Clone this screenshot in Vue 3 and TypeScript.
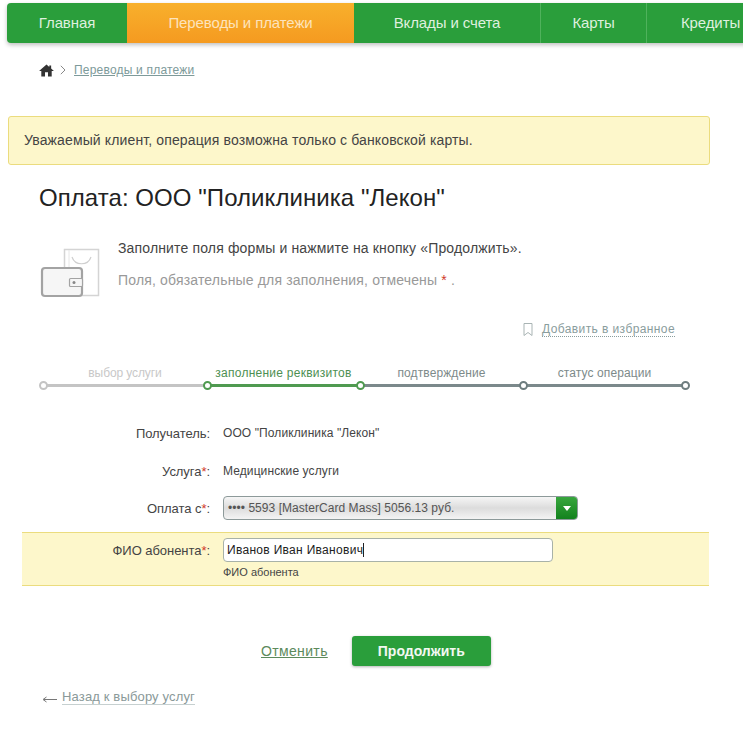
<script setup lang="ts">
interface NavItem { label: string; width: number; active?: boolean }
const nav: NavItem[] = [
  { label: 'Главная', width: 120 },
  { label: 'Переводы и платежи', width: 227, active: true },
  { label: 'Вклады и счета', width: 187 },
  { label: 'Карты', width: 106 },
  { label: 'Кредиты', width: 127 },
]
interface Step { label: string; state: string; width: number }
const steps: Step[] = [
  { label: 'выбор услуги', state: 'done', width: 164 },
  { label: 'заполнение реквизитов', state: 'active', width: 153 },
  { label: 'подтверждение', state: 'next', width: 163 },
  { label: 'статус операции', state: 'next', width: 163 },
]
</script>

<template>
  <div class="page">
    <nav class="nav">
      <a
        v-for="item in nav"
        :key="item.label"
        class="nav-item"
        :class="{ active: item.active }"
        :style="{ width: item.width + 'px' }"
      >{{ item.label }}</a>
    </nav>

    <div class="crumbs">
      <svg class="home" width="15" height="13" viewBox="0 0 16 14">
        <path d="M8 .5 0 7.600h2.400V13.500h4V9h3.200v4.500h4V7.600H16L13 4.900V1.500h-2v1.600Z" fill="#333" />
      </svg>
      <svg class="chev" width="6" height="10" viewBox="0 0 6 10">
        <path d="M.8.8 5 5 .8 9.200" fill="none" stroke="#888" />
      </svg>
      <a class="crumb-link">Переводы и платежи</a>
    </div>

    <div class="alert">Уважаемый клиент, операция возможна только с банковской карты.</div>

    <h1 class="title">Оплата: ООО "Поликлиника "Лекон"</h1>

    <div class="intro">
      <svg class="wallet" width="60" height="52" viewBox="0 0 60 52">
        <rect x="24.500" y="1.500" width="34" height="46" fill="#fff" stroke="#d4d4d4" stroke-width="1.500" />
        <path d="M29 2v20" stroke="#e6e6e6" />
        <path d="M32 9c3 9 16 9 19 0" fill="none" stroke="#cfcfcf" stroke-width="1.200" />
        <rect x="2" y="20" width="40" height="28" rx="3" fill="#f6f6f6" stroke="#a3a3a3" stroke-width="2.200" />
        <rect x="29.500" y="30.500" width="13" height="8" rx="1" fill="#f6f6f6" stroke="#a3a3a3" stroke-width="1.200" />
        <circle cx="34" cy="34.500" r="1.500" fill="#888" />
      </svg>
      <div class="intro-text">
        <p class="intro-main">Заполните поля формы и нажмите на кнопку «Продолжить».</p>
        <p class="intro-sub">Поля, обязательные для заполнения, отмечены <span class="req">*</span> .</p>
      </div>
    </div>

    <div class="fav-row">
      <svg width="10" height="13" viewBox="0 0 10 13">
        <path d="M1 .5h8v12L5 9.500 1 12.500Z" fill="none" stroke="#a9b4b4" />
      </svg>
      <a class="fav">Добавить в избранное</a>
    </div>

    <div class="steps">
      <div
        v-for="step in steps"
        :key="step.label"
        class="step"
        :class="step.state"
        :style="{ width: step.width + 'px' }"
      >
        <div class="step-label">{{ step.label }}</div>
        <div class="step-line"><i class="dot" /></div>
      </div>
      <i class="dot end" />
    </div>

    <div class="form">
      <div class="row row-a">
        <div class="label">Получатель:</div>
        <div class="value">ООО "Поликлиника "Лекон"</div>
      </div>
      <div class="row row-b">
        <div class="label">Услуга<span class="req">*</span>:</div>
        <div class="value">Медицинские услуги</div>
      </div>
      <div class="row row-c">
        <div class="label">Оплата с<span class="req">*</span>:</div>
        <div class="select">
          <span class="select-text">•••• 5593 [MasterCard Mass] 5056.13 руб.</span>
          <span class="select-btn"><i class="tri" /></span>
        </div>
      </div>
      <div class="row-hl">
        <div class="label hl-label">ФИО абонента<span class="req">*</span>:</div>
        <div class="hl-field">
          <div class="input">Иванов Иван Иванович<i class="caret" /></div>
          <div class="hint">ФИО абонента</div>
        </div>
      </div>
    </div>

    <div class="actions">
      <a class="cancel">Отменить</a>
      <button class="submit" type="button">Продолжить</button>
    </div>

    <div class="back">
      <svg width="15" height="9" viewBox="0 0 15 9">
        <path d="M15 4.500H2M4.500 2 1 4.500 4.500 7" fill="none" stroke="#777" />
      </svg>
      <a class="back-link">Назад к выбору услуг</a>
    </div>
  </div>
</template>

<style>
html, body { margin: 0; background: #fff; overflow: hidden; }
</style>

<style scoped>
.page {
  width: 743px;
  height: 739px;
  overflow: hidden;
  font-family: "Liberation Sans", Arial, sans-serif;
  color: #333;
  padding-top: 3px;
  box-sizing: border-box;
}
.nav {
  display: flex;
  margin-left: 7px;
  width: 760px;
  height: 40px;
  background: #2a9e3b;
  border-radius: 4px 0 0 4px;
  box-shadow: 0 2px 4px rgba(0, 0, 0, .25);
}
.nav-item {
  flex: none;
  box-sizing: border-box;
  height: 40px;
  line-height: 40px;
  text-align: center;
  color: #dff0df;
  font-size: 15px;
  letter-spacing: -.1px;
  border-right: 1px solid #4fb25c;
}
.nav-item:first-child { border-radius: 4px 0 0 4px; border-right: 0; }
.nav-item:nth-child(2), .nav-item:last-child { border-right: 0; }
.nav-item.active {
  background: linear-gradient(#f8b02c, #f59a20);
  color: #fde3bc;
}
.crumbs {
  display: flex;
  align-items: center;
  margin: 20px 0 0 39px;
  height: 14px;
}
.chev { margin-left: 6px; }
.crumb-link {
  margin-left: 8px;
  font-size: 12px;
  letter-spacing: .2px;
  color: #7d9a9a;
  text-decoration: underline;
}
.alert {
  margin: 39px 33px 0 8px;
  height: 49px;
  box-sizing: border-box;
  padding: 0 15px;
  line-height: 47px;
  background: #fdf7cb;
  border: 1px solid #ebdc7e;
  border-radius: 3px;
  font-size: 14px;
  letter-spacing: .13px;
  color: #444;
}
.title {
  margin: 19px 0 0 39px;
  font-size: 24px;
  line-height: 28px;
  font-weight: 400;
  letter-spacing: .06px;
  color: #222;
}
.intro {
  display: flex;
  margin: 27px 0 0 40px;
}
.wallet { margin-top: 9px; flex: none; }
.intro-text { margin-left: 18px; }
.intro-main {
  margin: 0;
  font-size: 14px;
  line-height: 18px;
  letter-spacing: .15px;
  color: #444;
}
.intro-sub {
  margin: 14px 0 0;
  font-size: 14px;
  line-height: 18px;
  letter-spacing: .17px;
  color: #999;
}
.req { color: #d0392b; }
.fav-row {
  display: flex;
  align-items: center;
  justify-content: flex-end;
  margin: 21px 68px 0 0;
  gap: 9px;
  height: 16px;
}
.fav {
  font-size: 12px;
  letter-spacing: .4px;
  color: #8a9d9d;
  border-bottom: 1px dotted #8a9d9d;
}
.steps {
  display: flex;
  margin: 29px 0 0 43px;
  position: relative;
  width: 643px;
}
.step { flex: none; }
.step-label {
  height: 18px;
  line-height: 14px;
  text-align: center;
  font-size: 12px;
  letter-spacing: .1px;
  color: #7d8a8a;
  white-space: nowrap;
}
.step.done .step-label { color: #c8c8c8; letter-spacing: -.1px; }
.step.active .step-label { color: #4d8f52; letter-spacing: .25px; }
.step-line {
  position: relative;
  height: 3px;
  background: #7b898b;
}
.step.done .step-line { background: #c4c4c4; }
.step.active .step-line { background: #4f9a50; }
.dot {
  position: absolute;
  left: -4px;
  top: -3px;
  width: 9px;
  height: 9px;
  box-sizing: border-box;
  border: 2px solid #6e7d7f;
  border-radius: 50%;
  background: #fff;
}
.step.done .dot { border-color: #c4c4c4; }
.step.active .dot { border-color: #4f9a50; }
.step:nth-child(3) .dot { border-color: #4f9a50; }
.dot.end { left: auto; right: -4px; top: auto; bottom: -3px; }
.form { margin-top: 36px; }
.row { display: flex; align-items: center; }
.row-a { height: 20px; }
.row-b { height: 20px; margin-top: 18px; }
.row-c { height: 24px; margin-top: 15px; }
.label {
  width: 210px;
  flex: none;
  text-align: right;
  font-size: 13px;
  letter-spacing: -.05px;
  color: #444;
}
.value {
  margin-left: 13px;
  font-size: 12px;
  letter-spacing: .1px;
  color: #444;
}
.select {
  margin-left: 13px;
  width: 355px;
  height: 24px;
  box-sizing: border-box;
  display: flex;
  align-items: center;
  justify-content: space-between;
  border: 1px solid #8d9a9a;
  border-radius: 4px;
  background: linear-gradient(#f6f6f6, #dcdcdc 50%, #f4f4f4);
  overflow: hidden;
}
.select-text {
  padding-left: 4px;
  font-size: 12px;
  letter-spacing: .05px;
  color: #555;
}
.select-btn {
  width: 21px;
  height: 24px;
  display: flex;
  align-items: center;
  justify-content: center;
  background: linear-gradient(#3aa83f, #11801c);
}
.tri {
  width: 0;
  height: 0;
  border: 4px solid transparent;
  border-top: 5px solid #fff;
  border-bottom: 0;
}
.row-hl {
  display: flex;
  margin: 12px 34px 0 22px;
  height: 54px;
  box-sizing: border-box;
  background: #fdf7cb;
  border-top: 1px solid #ebdc7e;
  border-bottom: 1px solid #ebdc7e;
}
.hl-label { width: 188px; padding-top: 10px; box-sizing: border-box; }
.hl-field { margin-left: 13px; padding-top: 5px; }
.input {
  width: 330px;
  height: 24px;
  box-sizing: border-box;
  border: 1px solid #a8b2a8;
  border-radius: 4px;
  background: #fff;
  padding: 0 3px;
  line-height: 22px;
  font-size: 12px;
  letter-spacing: .3px;
  color: #222;
  display: flex;
  align-items: center;
}
.caret {
  display: block;
  width: 1px;
  height: 14px;
  background: #222;
}
.hint {
  margin-top: 4px;
  font-size: 11px;
  line-height: 12px;
  color: #444;
}
.actions {
  display: flex;
  align-items: center;
  margin: 50px 0 0 261px;
}
.cancel {
  font-size: 14px;
  letter-spacing: .35px;
  color: #5c8a5c;
  text-decoration: underline;
}
.submit {
  margin-left: 24px;
  width: 139px;
  height: 30px;
  border: 0;
  border-radius: 3px;
  background: #2a9e3b;
  box-shadow: 0 1px 3px rgba(0, 0, 0, .3);
  color: #f2f8f2;
  font: 700 14px "Liberation Sans", Arial, sans-serif;
}
.back {
  display: flex;
  align-items: center;
  margin: 23px 0 0 42px;
  gap: 5px;
}
.back svg { margin-top: 5px; }
.back-link {
  font-size: 13px;
  letter-spacing: .15px;
  color: #8a9999;
  border-bottom: 1px solid #c6d0d0;
}
</style>
